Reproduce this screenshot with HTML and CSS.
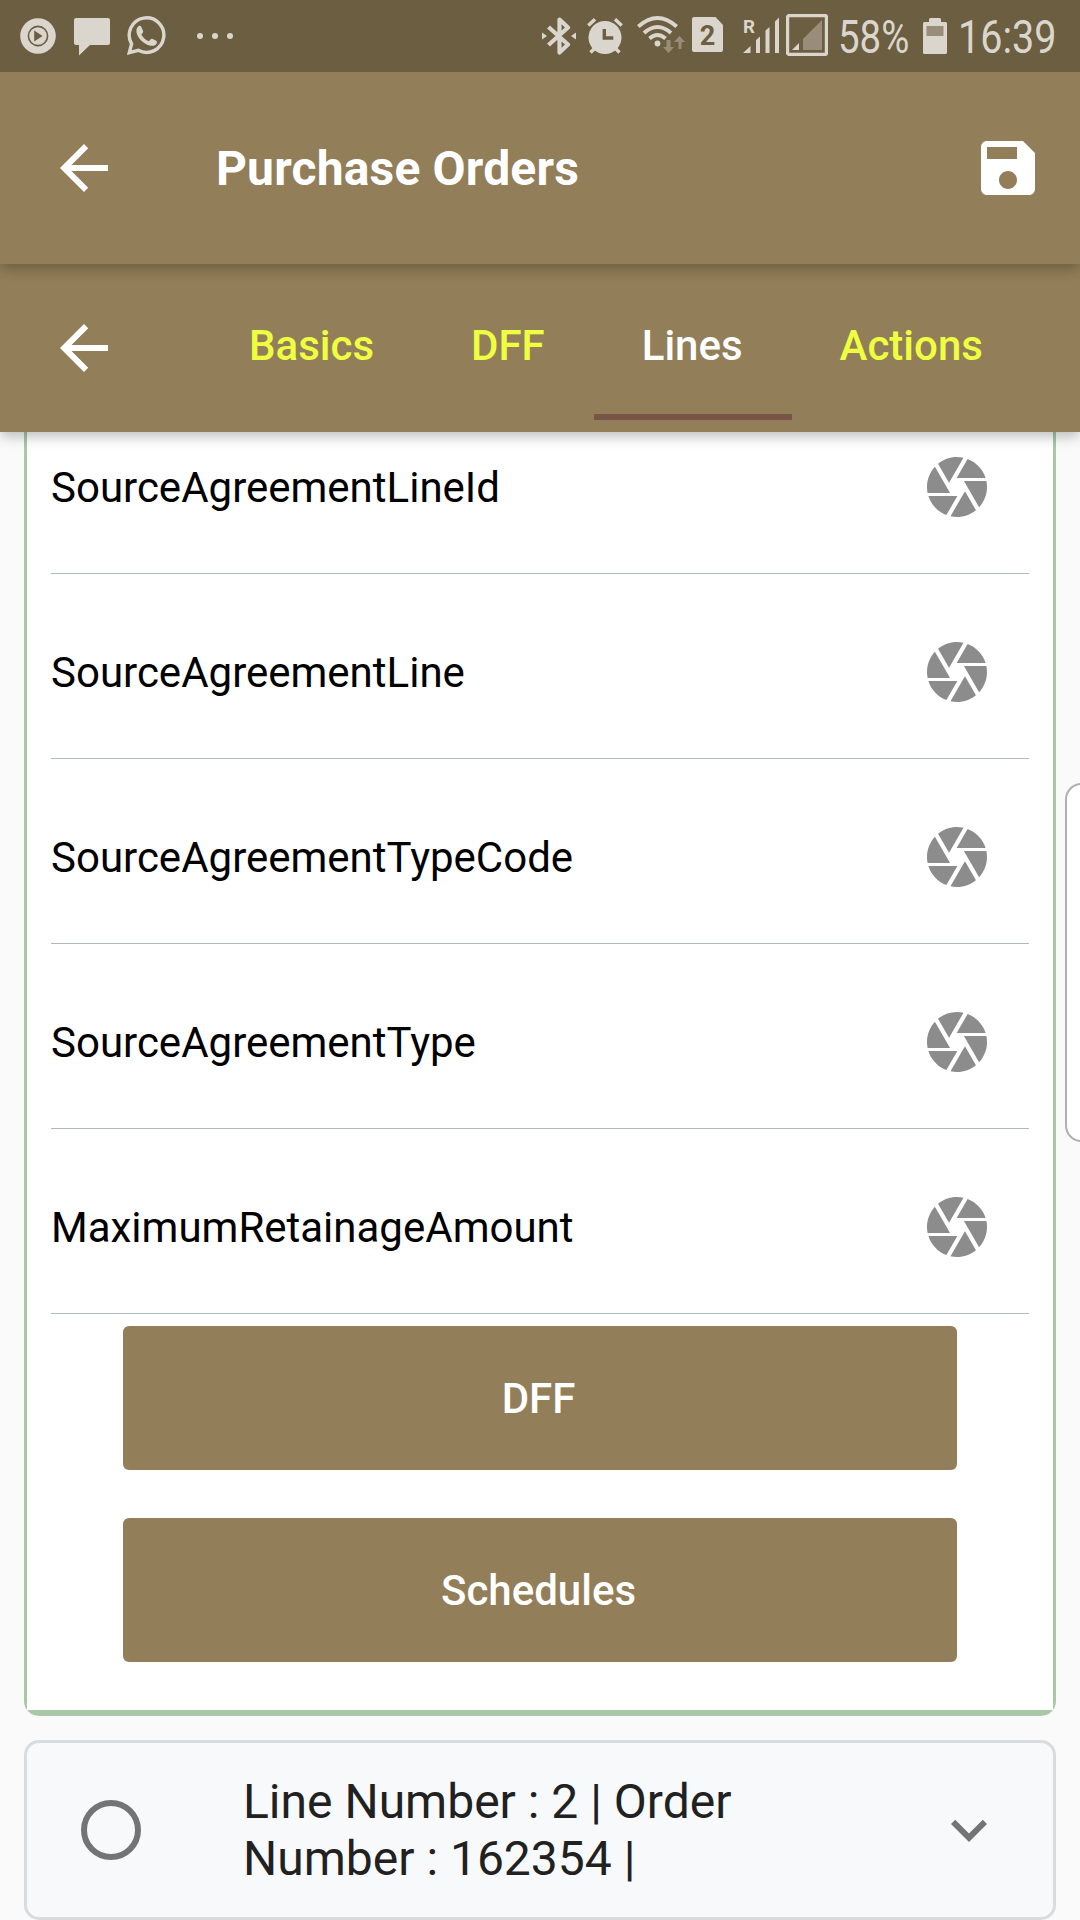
FILE: index.html
```html
<!DOCTYPE html>
<html lang="en">
<head>
<meta charset="utf-8">
<title>Purchase Orders</title>
<link rel="stylesheet" href="styles.css">
</head>
<body>
<svg class="defs" aria-hidden="true">
  <symbol id="back" viewBox="0 0 24 24"><path d="M20 11H7.83l5.59-5.59L12 4l-8 8 8 8 1.41-1.41L7.83 13H20v-2z"/></symbol>
  <symbol id="save" viewBox="0 0 24 24"><path d="M17 3H5c-1.11 0-2 .9-2 2v14c0 1.1.89 2 2 2h14c1.1 0 2-.9 2-2V7l-4-4zm-5 16c-1.66 0-3-1.34-3-3s1.34-3 3-3 3 1.34 3 3-1.34 3-3 3zm3-10H5V5h10v4z"/></symbol>
  <symbol id="camera" viewBox="0 0 24 24"><path d="M9.4 10.5l4.77-8.26C13.47 2.09 12.75 2 12 2c-2.4 0-4.6.85-6.32 2.25l3.66 6.35.06-.1zM21.54 9c-.92-2.92-3.15-5.26-6-6.34L11.88 9h9.66zm.26 1h-7.49l.29.5 4.76 8.25C21 16.97 22 14.61 22 12c0-.69-.07-1.35-.2-2zM8.54 12l-3.9-6.75C3.01 7.03 2 9.39 2 12c0 .69.07 1.35.2 2h7.49l-1.15-2zm-6.08 3c.92 2.92 3.15 5.26 6 6.34L12.12 15H2.46zm11.27 0l-3.9 6.76c.7.15 1.42.24 2.17.24 2.4 0 4.6-.85 6.32-2.25l-3.66-6.35-.93 1.6z"/></symbol>
  <symbol id="chevron" viewBox="0 0 24 24"><path d="M16.59 8.59L12 13.17 7.41 8.59 6 10l6 6 6-6z"/></symbol>
</svg>

<div class="screen">
  <header class="status">
    <div class="notifications">
      <svg class="st-play" width="36" height="36" viewBox="0 0 36 36"><circle cx="18" cy="18" r="17.8"/><circle class="cut-line" cx="18" cy="18" r="9.6"/><path class="cut" d="M14.2 12.4v11.2l8.4-5.6z"/></svg>
      <svg class="st-chat" width="36" height="38" viewBox="0 0 36 38"><path d="M2 0h32a2 2 0 0 1 2 2v23a2 2 0 0 1-2 2H16L5 37.500V27H2a2 2 0 0 1-2-2V2a2 2 0 0 1 2-2z"/></svg>
      <svg class="st-whatsapp" width="39" height="40" viewBox="0 0 39 40"><path class="line" d="M2.300 36.700L4.600 27.800A17.300 17.300 0 1 1 11.300 34.300Z"/><path d="M11 10.500c1.300-1.200 2.700-1 3.300.3l1.800 4.100c.4 1-.2 1.900-1.800 3.500 1.900 3.300 4.400 5.500 7.700 6.800 1.300-1.500 2-2.900 3.200-2.400l4 2c1.300.8.8 2.400-.3 3.600-1.600 1.700-4 1.700-6.400 1-6.500-2-10.300-6.400-12.400-11-1.200-2.900-.8-6.200.9-7.900z"/></svg>
      <svg class="st-more" width="38" height="8" viewBox="0 0 38 8"><circle cx="4" cy="4" r="3"/><circle cx="19" cy="4" r="3"/><circle cx="34" cy="4" r="3"/></svg>
    </div>
    <div class="system">
      <svg class="st-bluetooth" width="34" height="38" viewBox="0 0 34 38"><path class="line bt" d="M6.500 10L26 27.500 17.500 35.500V2.500L26 10.500 6.500 28"/><path d="M0 15.500L5 19l-5 3.500zM34 15.500L29 19l5 3.500z"/></svg>
      <svg class="st-alarm" width="36" height="38" viewBox="0 0 36 38"><circle cx="18" cy="20.500" r="16.500"/><path class="line" d="M1.300 8.500L8 2.200M34.700 8.500L28 2.200M7.500 31.500L3.500 35.500M28.500 31.500L32.500 35.500"/><path class="cut-hand" d="M17.300 12v9h9"/></svg>
      <svg class="st-wifi" width="49" height="38" viewBox="0 0 49 38"><path class="line wf" d="M1.300 10.500Q20.500-6.500 39.700 10.500M7 17Q20.500 5 34 17M12.500 22.500Q20.500 15.500 28.500 22.500"/><circle cx="20.500" cy="27.500" r="2.900"/><path class="dim" d="M29.500 24v7H26l5.500 6 5.500-6h-3.500v-7zM41.500 33v-7H37l5.500-6 5.500 6h-3.500v7z"/></svg>
      <svg class="st-sim" width="31" height="36" viewBox="0 0 31 36"><path d="M2 0h21.500L31 8v25a2 2 0 0 1-2 2H2a2 2 0 0 1-2-2V2a2 2 0 0 1 2-2z"/><text class="sim-num" x="15.500" y="27.500" text-anchor="middle">2</text></svg>
      <svg class="st-signal" width="36" height="38" viewBox="0 0 36 38"><text class="roam" x="0" y="16" textLength="12" lengthAdjust="spacingAndGlyphs">R</text><path d="M0 36l7.500-7v7zM13 23l4-3.500V36h-4zM22.500 13.500l4-3.500v26h-4zM32 4.500L36 .5V36h-4z"/></svg>
      <svg class="st-boxed" width="42" height="42" viewBox="0 0 42 42"><rect class="line" x="1.500" y="1.500" width="39" height="39" rx="2"/><path d="M6 36l7-7v7z"/><path class="dim" d="M17 25L36 6v30H17z"/></svg>
      <span class="percent"><span>58%</span></span>
      <svg class="st-battery" width="24" height="36" viewBox="0 0 24 36"><path d="M7.500 0h9a1.500 1.500 0 0 1 1.500 1.500V4h4.500A1.500 1.500 0 0 1 24 5.500v29a1.500 1.500 0 0 1-1.500 1.500h-21A1.500 1.500 0 0 1 0 34.500v-29A1.500 1.500 0 0 1 1.500 4H6V1.500A1.500 1.500 0 0 1 7.500 0z"/><path class="dim-solid" d="M3.500 8h17v10h-17z"/></svg>
      <span class="clock"><span>16:39</span></span>
    </div>
  </header>

  <div class="appbar">
    <svg class="icon"><use href="#back"/></svg>
    <h1 class="title">Purchase Orders</h1>
    <svg class="icon"><use href="#save"/></svg>
  </div>

  <nav class="tabbar">
    <svg class="icon"><use href="#back"/></svg>
    <div class="tabs">
      <span class="tab">Basics</span>
      <span class="tab">DFF</span>
      <span class="tab active">Lines</span>
      <span class="tab">Actions</span>
    </div>
  </nav>

  <main class="content">
    <section class="card">
      <div class="card-body">
        <div class="row"><span>SourceAgreementLineId</span><svg class="icon"><use href="#camera"/></svg></div>
        <div class="row"><span>SourceAgreementLine</span><svg class="icon"><use href="#camera"/></svg></div>
        <div class="row"><span>SourceAgreementTypeCode</span><svg class="icon"><use href="#camera"/></svg></div>
        <div class="row"><span>SourceAgreementType</span><svg class="icon"><use href="#camera"/></svg></div>
        <div class="row"><span>MaximumRetainageAmount</span><svg class="icon"><use href="#camera"/></svg></div>
        <div class="buttons">
          <button class="button">DFF</button>
          <button class="button">Schedules</button>
        </div>
      </div>
    </section>
    <section class="line-card">
      <span class="radio"></span>
      <p class="line-text">Line Number : 2 | Order<br>Number : 162354 |</p>
      <svg class="icon"><use href="#chevron"/></svg>
    </section>
  </main>
  <div class="edge-handle"></div>
</div>
</body>
</html>
```
FILE: styles.css
```css
* { box-sizing: border-box; }
body { margin: 0; font-family: Roboto, "Liberation Sans", sans-serif; }
.defs { position: absolute; width: 0; height: 0; }
.screen {
  position: relative;
  width: 1080px;
  height: 1920px;
  overflow: hidden;
  display: flex;
  flex-direction: column;
  background: #fafafa;
}
.icon { width: 72px; height: 72px; flex: none; fill: currentColor; }

/* Status bar */
.status {
  position: relative;
  z-index: 4;
  height: 72px;
  flex: none;
  display: flex;
  justify-content: space-between;
  background: #6c5e40;
  color: #dbd6cd;
}
.status svg { flex: none; fill: currentColor; }
.notifications, .system { display: flex; align-items: flex-start; }
.status .cut { fill: #6c5e40; }
.status .cut-line { fill: none; stroke: #6c5e40; stroke-width: 1.6; }
.status .cut-hand { fill: none; stroke: #6c5e40; stroke-width: 3.4; }
.status .line { fill: none; stroke: currentColor; stroke-width: 3.4; }
.status .bt { stroke-width: 4.2; stroke-linejoin: round; }
.status .wf { stroke-width: 3.8; }
.status .dim, .status .dim-solid { fill: #998d79; }
.sim-num { font-size: 27px; font-weight: 700; fill: #6c5e40; }
.roam { font-size: 18px; font-weight: 700; }
.st-play { margin: 18px 0 0 20px; }
.st-chat { margin: 18px 0 0 18px; }
.st-whatsapp { margin: 16px 0 0 17px; }
.st-more { margin: 32px 0 0 30px; }
.st-bluetooth { margin-top: 17px; }
.st-alarm { margin: 17px 0 0 11px; }
.st-wifi { margin: 16px 0 0 14px; }
.st-sim { margin: 17px 0 0 6px; }
.st-signal { margin: 17px 0 0 20px; }
.st-boxed { margin: 14px 0 0 7px; }
.percent, .clock { font-size: 46px; line-height: 72px; white-space: nowrap; }
.percent span, .clock span { display: block; transform-origin: 0 0; }
.percent { width: 69px; margin: 1px 0 0 10px; }
.percent span { transform: scaleX(.835); }
.st-battery { margin: 18px 0 0 16px; }
.clock { width: 122px; margin: 1px 0 0 11px; }
.clock span { transform: scaleX(.86); }

/* Header bars */
.appbar, .tabbar {
  flex: none;
  display: flex;
  align-items: center;
  position: relative;
  background: #927e58;
  color: #fff;
  box-shadow: 0 6px 12px -1px rgba(0,0,0,.18), 0 2px 15px rgba(0,0,0,.1);
}
.appbar { z-index: 3; height: 192px; padding: 0 36px 0 48px; }
.title {
  flex: 1;
  margin: 0 0 0 96px;
  padding-top: 2px;
  font-size: 48px;
  line-height: 56px;
  font-weight: 700;
  letter-spacing: .17px;
}
.tabbar { z-index: 2; height: 168px; padding-left: 48px; }
.tabs { display: flex; align-self: flex-start; margin-left: 81px; height: 156px; }
.tab {
  padding: 57px 49px 0 48px;
  border-bottom: 6px solid transparent;
  font-size: 42px;
  line-height: 49px;
  font-weight: 500;
  color: #eeff41;
}
.tab.active { color: #fff; border-bottom-color: #795548; }

/* Scrolling list */
.content { flex: 1; min-height: 0; overflow: hidden; padding: 0 24px; }
.card {
  margin-top: -60px;
  border: solid #a8c8a8;
  border-width: 3px 3px 6px;
  border-radius: 15px;
}
.card-body { padding: 14px 24px 48px; background: #fff; }
.row {
  display: flex;
  align-items: center;
  justify-content: space-between;
  height: 185px;
  padding: 12px 36px 0 0;
  border-bottom: 1px solid #b0babd;
  font-size: 42px;
  color: #000;
}
.row .icon { color: #8c8c8c; }
.buttons { display: flex; flex-direction: column; gap: 48px; padding: 12px 72px 0; }
.button {
  height: 144px;
  padding: 0 3px 0 0;
  border: 0;
  border-radius: 6px;
  background: #927e58;
  color: #fff;
  font: 500 42px Roboto, "Liberation Sans", sans-serif;
}
.line-card {
  display: flex;
  align-items: center;
  height: 180px;
  margin-top: 24px;
  padding: 0 48px 0 54px;
  border: 3px solid #d9dbdd;
  border-radius: 15px;
  background: #f8f9fb;
  color: #737476;
}
.radio { width: 60px; height: 60px; border: 6px solid #737476; border-radius: 50%; }
.line-text { flex: 1; margin: 0 0 0 102px; font-size: 48px; line-height: 57px; color: #212121; }

/* Edge panel handle lying over the page */
.edge-handle {
  position: absolute;
  z-index: 5;
  top: 783px;
  right: -18px;
  width: 33px;
  height: 359px;
  border: 2px solid #b0b0b0;
  border-radius: 18px;
  background: #fff;
}
```
